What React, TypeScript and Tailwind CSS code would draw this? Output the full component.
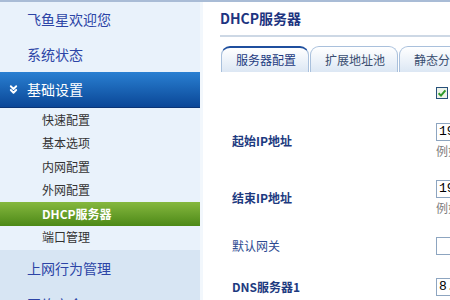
import { ChevronsDown } from 'lucide-react';

const FONT = '"Noto Sans CJK SC", "Liberation Sans", sans-serif';

function SideItem({ label }: { label: string }) {
  return (
    <div className="flex h-[35px] shrink-0 items-center pl-[27px] text-[14px] text-[#2c44a6]">{label}</div>
  );
}

function SubItem({ label, active }: { label: string; active?: boolean }) {
  return (
    <div
      className={
        active
          ? 'flex h-[23.5px] shrink-0 items-center bg-gradient-to-b from-[#86b83e] to-[#4c8916] pl-[42px] text-[12px] font-bold text-white'
          : 'flex h-[23.5px] shrink-0 items-center pl-[42px] text-[12px] text-[#333]'
      }
    >
      {label}
    </div>
  );
}

function Tab({ label, active }: { label: string; active?: boolean }) {
  return (
    <div
      className={
        'flex h-[26px] w-[88px] shrink-0 items-center rounded-t-[9px] border border-b-0 border-[#a9c0dc] bg-gradient-to-b from-white to-[#dce7f4] pl-[14px] text-[12px] ' +
        (active ? 'border-t-2 border-t-[#1f4f9e] text-[#1d3a80]' : 'text-[#3a4d70]')
      }
    >
      {label}
    </div>
  );
}

function TextBox({ value }: { value?: string }) {
  return (
    <div
      className="flex h-[18px] w-[60px] shrink-0 items-center border border-[#8da5c0] bg-white pl-[2px] text-[13px] text-black"
      style={{ fontFamily: '"Liberation Mono", monospace' }}
    >
      {value}
    </div>
  );
}

function Label({ text, bold = true }: { text: string; bold?: boolean }) {
  return (
    <div
      className={
        bold
          ? 'w-[204px] shrink-0 text-[12px] font-bold text-[#1d3a80]'
          : 'w-[204px] shrink-0 text-[12px] text-[#2c4a90]'
      }
    >
      {text}
    </div>
  );
}

export default function App() {
  return (
    <div
      className="flex h-[300px] w-[450px] overflow-hidden border-t-2 border-[#a9bcd6] bg-white"
      style={{ fontFamily: FONT }}
    >
      <aside className="flex w-[203px] shrink-0 flex-col border-r-[3px] border-[#f2f7fc] bg-[#e9f2fb]">
        <SideItem label="飞鱼星欢迎您" />
        <SideItem label="系统状态" />
        <div className="flex h-[36px] shrink-0 items-center gap-[7px] border-b border-[#0a3576] bg-gradient-to-b from-[#2a80d2] to-[#0b4797] pl-[7px] text-[14px] text-white">
          <ChevronsDown size={13} strokeWidth={3.5} />
          <span>基础设置</span>
        </div>
        <SubItem label="快速配置" />
        <SubItem label="基本选项" />
        <SubItem label="内网配置" />
        <SubItem label="外网配置" />
        <SubItem label="DHCP服务器" active />
        <SubItem label="端口管理" />
        <div className="mt-[1px] flex-1 shrink-0 bg-[#d7e5f3]">
          <div className="flex h-[36px] items-center pl-[27px] text-[14px] text-[#2c44a6]">上网行为管理</div>
          <div className="flex h-[36px] items-center pl-[27px] text-[14px] text-[#2c44a6]">网络安全</div>
        </div>
      </aside>

      <main className="flex min-w-0 flex-1 flex-col overflow-hidden pl-[17px]">
        <div className="flex h-[33px] shrink-0 items-center text-[14px] font-bold text-[#1d3480]">DHCP服务器</div>
        <div className="h-[2px] shrink-0 bg-[#cdd8e5]" />
        <div className="mt-[9px] flex shrink-0 gap-[1px] pl-[1px]">
          <Tab label="服务器配置" active />
          <Tab label="扩展地址池" />
          <Tab label="静态分配" />
        </div>

        <div className="flex shrink-0 flex-col pl-[12px]">
          <div className="flex h-[40px] shrink-0 items-center">
            <div className="w-[204px] shrink-0" />
            <svg width="12" height="12" viewBox="0 0 12 12" className="mt-[1px] shrink-0">
              <rect x="0.5" y="0.5" width="11" height="11" fill="#eef3ea" stroke="#27507a" />
              <path d="M2.6 6.2 L5 8.6 L9.4 3.4" fill="none" stroke="#2f9a2a" strokeWidth="2" />
            </svg>
          </div>

          <div className="flex h-[58px] shrink-0 items-center">
            <Label text="起始IP地址" />
            <div className="flex shrink-0 flex-col">
              <TextBox value="19" />
              <div className="mt-[1px] text-[12px] text-[#7d7d7d]">例如</div>
            </div>
          </div>

          <div className="flex h-[56px] shrink-0 items-center">
            <Label text="结束IP地址" />
            <div className="flex shrink-0 flex-col">
              <TextBox value="19" />
              <div className="mt-[1px] text-[12px] text-[#7d7d7d]">例如</div>
            </div>
          </div>

          <div className="flex h-[40px] shrink-0 items-center">
            <Label text="默认网关" bold={false} />
            <TextBox />
          </div>

          <div className="flex h-[42px] shrink-0 items-center">
            <Label text="DNS服务器1" />
            <TextBox value="8." />
          </div>
        </div>
      </main>
    </div>
  );
}
